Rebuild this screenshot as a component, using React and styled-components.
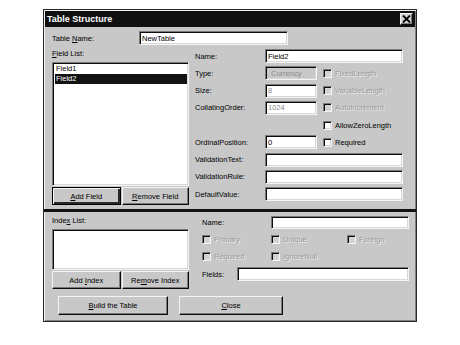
import React from "react";
import styled, { createGlobalStyle, css } from "styled-components";

const GlobalStyle = createGlobalStyle`
  body {
    margin: 0;
    background: #ffffff;
    font-family: "Liberation Sans", Arial, sans-serif;
    font-size: 7.5px;
    color: #000;
  }
`;

const sunken = css`
  border-top: 1px solid #7a7a7a;
  border-left: 1px solid #7a7a7a;
  border-right: 1px solid #f4f4f4;
  border-bottom: 1px solid #f4f4f4;
  box-shadow: inset 1px 1px 0 #0c0c0c, inset -1px -1px 0 #d8d8d8;
`;

const raised = css`
  border-top: 1px solid #f4f4f4;
  border-left: 1px solid #f4f4f4;
  border-right: 1px solid #0c0c0c;
  border-bottom: 1px solid #0c0c0c;
  box-shadow: inset -1px -1px 0 #7a7a7a;
`;

function Index() {
  return (
    <>
      <GlobalStyle />
      <Dialog>
        <TitleBar>
          <Title>Table Structure</Title>
          <CloseBox>
            <svg width="9" height="8" viewBox="0 0 9 8">
              <path d="M1 0.5 L8 7.5 M8 0.5 L1 7.5" stroke="#000" strokeWidth="1.8" />
            </svg>
          </CloseBox>
        </TitleBar>

        <Content>
          <Row h={14}>
            <Label w={87}>
              Table <u>N</u>ame:
            </Label>
            <TextBox w={149}>NewTable</TextBox>
          </Row>

          <Section top={4}>
            <LeftColumn>
              <Label h={13}>
                <u>F</u>ield List:
              </Label>
              <ListBox h={124}>
                <ListItem>Field1</ListItem>
                <ListItem selected>Field2</ListItem>
              </ListBox>
              <ButtonRow top={1}>
                <Button w={69} primary>
                  <span>
                    <u>A</u>dd Field
                  </span>
                </Button>
                <Button w={68}>
                  <span>
                    <u>R</u>emove Field
                  </span>
                </Button>
              </ButtonRow>
            </LeftColumn>

            <FieldColumn>
              <Row h={14}>
                <Label w={70}>Name:</Label>
                <TextBox w={138}>Field2</TextBox>
              </Row>
              <Row h={14}>
                <Label w={70}>Type:</Label>
                <TextBox w={52} grey dim pad={5}>
                  Currency
                </TextBox>
                <Check disabled>FixedLength</Check>
              </Row>
              <Row h={14}>
                <Label w={70}>Size:</Label>
                <TextBox w={52} dim>
                  8
                </TextBox>
                <Check disabled>VariableLength</Check>
              </Row>
              <Row h={14}>
                <Label w={70}>CollatingOrder:</Label>
                <TextBox w={52} dim>
                  1024
                </TextBox>
                <Check disabled>AutoIncrement</Check>
              </Row>
              <Row h={14}>
                <Label w={122} />
                <Check>AllowZeroLength</Check>
              </Row>
              <Row h={14}>
                <Label w={70}>OrdinalPosition:</Label>
                <TextBox w={52}>0</TextBox>
                <Check>Required</Check>
              </Row>
              <Row h={14}>
                <Label w={70}>ValidationText:</Label>
                <TextBox w={138} />
              </Row>
              <Row h={14}>
                <Label w={70}>ValidationRule:</Label>
                <TextBox w={138} />
              </Row>
              <Row h={14}>
                <Label w={70}>DefaultValue:</Label>
                <TextBox w={138} />
              </Row>
            </FieldColumn>
          </Section>

          <Separator />

          <Section top={4}>
            <LeftColumn>
              <Label h={13}>
                Inde<u>x</u> List:
              </Label>
              <ListBox h={41} />
              <ButtonRow top={1}>
                <Button w={69}>
                  <span>
                    Add <u>I</u>ndex
                  </span>
                </Button>
                <Button w={68}>
                  <span>
                    Re<u>m</u>ove Index
                  </span>
                </Button>
              </ButtonRow>
            </LeftColumn>

            <IndexColumn>
              <Row h={13}>
                <Label w={69}>Name:</Label>
                <TextBox w={138} />
              </Row>
              <Row h={13}>
                <CheckCell w={69}>
                  <Check disabled flush>
                    Primary
                  </Check>
                </CheckCell>
                <CheckCell w={76}>
                  <Check disabled flush>
                    Unique
                  </Check>
                </CheckCell>
                <Check disabled flush>
                  Foreign
                </Check>
              </Row>
              <Row h={13}>
                <CheckCell w={69}>
                  <Check disabled flush>
                    Required
                  </Check>
                </CheckCell>
                <Check disabled flush>
                  IgnoreNull
                </Check>
              </Row>
              <Row h={14}>
                <Label w={35}>Fields:</Label>
                <TextBox w={172} />
              </Row>
            </IndexColumn>
          </Section>

          <FooterRow>
            <Button w={110} h={19}>
              <span>
                <u>B</u>uild the Table
              </span>
            </Button>
            <Button w={104} h={19}>
              <span>
                <u>C</u>lose
              </span>
            </Button>
          </FooterRow>
        </Content>
      </Dialog>
    </>
  );
}

function Check({ children, disabled, flush }) {
  return (
    <CheckWrap flush={flush}>
      <CheckBox disabled={disabled} />
      <CheckText disabled={disabled}>{children}</CheckText>
    </CheckWrap>
  );
}

export default Index;

const Dialog = styled.div`
  width: 374px;
  height: 313px;
  margin: 9px 0 0 43px;
  box-sizing: border-box;
  background: #c8c8c8;
  border: 1px solid #2a2a2a;
  box-shadow: inset 1px 1px 0 #f0f0f0, inset -1px -1px 0 #808080;
  padding: 1px;
`;

const TitleBar = styled.div`
  height: 16px;
  background: #101010;
  display: flex;
  align-items: center;
  justify-content: space-between;
  padding: 0 2px 0 2px;
`;

const Title = styled.div`
  color: #fff;
  font-weight: bold;
  font-size: 9px;
`;

const CloseBox = styled.div`
  width: 13px;
  height: 12px;
  box-sizing: border-box;
  background: #d0d0d0;
  ${raised};
  display: flex;
  align-items: center;
  justify-content: center;
`;

const Content = styled.div`
  padding: 4px 7px 0 7px;
`;

const Row = styled.div`
  display: flex;
  align-items: center;
  height: ${(p) => p.h}px;
`;

const Label = styled.div`
  width: ${(p) => (p.w ? `${p.w}px` : "auto")};
  height: ${(p) => (p.h ? `${p.h}px` : "auto")};
  flex-shrink: 0;
  white-space: nowrap;
`;

const TextBox = styled.div`
  width: ${(p) => p.w}px;
  height: 100%;
  box-sizing: border-box;
  flex-shrink: 0;
  background: ${(p) => (p.grey ? "#c8c8c8" : "#ffffff")};
  color: ${(p) => (p.dim ? "#8c8c8c" : "#000")};
  ${sunken};
  padding-left: ${(p) => p.pad || 2}px;
  display: flex;
  align-items: center;
  white-space: nowrap;
`;

const Section = styled.div`
  display: flex;
  margin-top: ${(p) => p.top}px;
`;

const LeftColumn = styled.div`
  width: 137px;
  display: flex;
  flex-direction: column;
`;

const FieldColumn = styled.div`
  margin-left: 6px;
  display: flex;
  flex-direction: column;
  gap: 3.25px;
`;

const IndexColumn = styled.div`
  margin-left: 13px;
  display: flex;
  flex-direction: column;
  gap: 4px;
`;

const ListBox = styled.div`
  height: ${(p) => p.h}px;
  box-sizing: border-box;
  background: #fff;
  ${sunken};
  padding: 1px 1px 0 2px;
`;

const ListItem = styled.div`
  height: 10px;
  line-height: 10px;
  padding-left: 1px;
  background: ${(p) => (p.selected ? "#121212" : "transparent")};
  color: ${(p) => (p.selected ? "#fff" : "#000")};
`;

const ButtonRow = styled.div`
  display: flex;
  gap: 1px;
  margin-top: ${(p) => p.top}px;
`;

const Button = styled.div`
  width: ${(p) => p.w}px;
  height: ${(p) => p.h || 18}px;
  box-sizing: border-box;
  background: #c8c8c8;
  ${raised};
  display: flex;
  align-items: center;
  justify-content: center;
  white-space: nowrap;
  ${(p) =>
    p.primary &&
    css`
      border: 1px solid #000;
      box-shadow: inset 1px 1px 0 #f4f4f4, inset -2px -2px 0 #2a2a2a;
    `}
`;

const Separator = styled.div`
  height: 3px;
  background: #111;
  margin: 4px -8px 0 -8px;
`;

const CheckCell = styled.div`
  width: ${(p) => p.w}px;
  flex-shrink: 0;
`;

const CheckWrap = styled.div`
  display: flex;
  align-items: center;
  margin-left: ${(p) => (p.flush ? 0 : 6)}px;
  white-space: nowrap;
`;

const CheckBox = styled.div`
  width: 9px;
  height: 9px;
  box-sizing: border-box;
  background: ${(p) => (p.disabled ? "#d2d2d2" : "#fff")};
  ${sunken};
`;

const CheckText = styled.span`
  margin-left: 3px;
  color: ${(p) => (p.disabled ? "#9a9a9a" : "#000")};
  text-shadow: ${(p) => (p.disabled ? "1px 1px 0 #eeeeee" : "none")};
`;

const FooterRow = styled.div`
  display: flex;
  gap: 11px;
  margin: 7px 0 0 6px;
`;
